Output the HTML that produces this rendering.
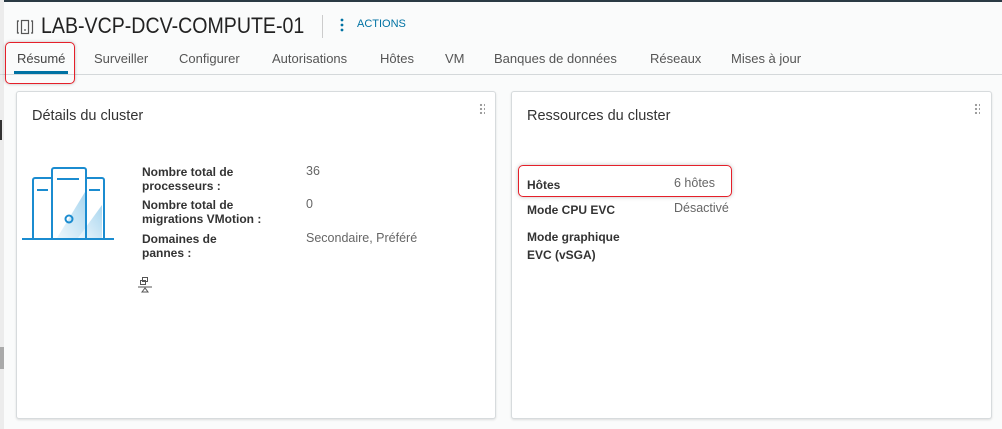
<!DOCTYPE html>
<html><head><meta charset="utf-8"><style>
*{margin:0;padding:0;box-sizing:border-box}
body{width:1002px;height:429px;overflow:hidden;background:#fafbfb;font-family:"Liberation Sans",sans-serif;position:relative;color:#333}
.a{position:absolute;white-space:nowrap}
.tab{position:absolute;top:51px;font-size:13px;color:#555}
.card{position:absolute;background:#fff;border:1px solid #d7dbdd;border-radius:3px;box-shadow:0 1px 2px rgba(0,0,0,.12)}
.lb{position:absolute;font-size:12px;font-weight:bold;color:#333;line-height:14px}
.vl{position:absolute;font-size:12.5px;color:#666}
.grip{position:absolute;width:6px;height:11px;background-image:radial-gradient(circle,#999 1px,transparent 1.3px);background-size:4px 4px}
</style></head><body>
<div class="a" style="left:0;top:0;width:1002px;height:2px;background:#2a3a44"></div>
<div class="a" style="left:0;top:0;width:4px;height:429px;background:#ececec"></div>
<div class="a" style="left:0;top:347px;width:4px;height:22px;background:#aaa"></div>
<div class="a" style="left:0;top:120px;width:2px;height:20px;background:#333"></div>
<svg class="a" style="left:16px;top:18px" width="18" height="18" viewBox="0 0 18 18" fill="none" stroke="#555" stroke-width="1.2"><path d="M3 3H1.5V15H3M15 3H16.5V15H15"/><rect x="5.5" y="2.5" width="7" height="13"/><path d="M8 12h2"/></svg>
<div class="a" style="left:41px;top:13px;font-size:22px;color:#222;transform:scaleX(0.89);transform-origin:0 0">LAB-VCP-DCV-COMPUTE-01</div>
<div class="a" style="left:322px;top:15px;width:1px;height:23px;background:#ccc"></div>
<svg class="a" style="left:339px;top:17px" width="6" height="16"><circle cx="3" cy="3" r="1.4" fill="#0072a3"/><circle cx="3" cy="8" r="1.4" fill="#0072a3"/><circle cx="3" cy="13" r="1.4" fill="#0072a3"/></svg>
<div class="a" style="left:357px;top:18px;font-size:11px;color:#0072a3">ACTIONS</div>
<div class="a" style="left:0;top:74px;width:1002px;height:1px;background:#d4d8da"></div>
<div class="tab" style="left:17px;color:#444">Résumé</div>
<div class="a" style="left:14px;top:71px;width:54px;height:3px;background:#0072a3"></div>
<div class="a" style="left:5px;top:42px;width:70px;height:42px;border:1.5px solid #e5202a;border-radius:5px;box-shadow:0 0 3px rgba(0,0,0,.25)"></div>
<div class="tab" style="left:94px">Surveiller</div>
<div class="tab" style="left:179px">Configurer</div>
<div class="tab" style="left:272px">Autorisations</div>
<div class="tab" style="left:380px">Hôtes</div>
<div class="tab" style="left:445px">VM</div>
<div class="tab" style="left:494px">Banques de données</div>
<div class="tab" style="left:650px">Réseaux</div>
<div class="tab" style="left:731px">Mises à jour</div>

<div class="card" style="left:16px;top:91px;width:480px;height:328px"></div>
<div class="grip" style="left:479px;top:103px"></div>
<div class="a" style="left:32px;top:108px;font-size:14.5px;color:#333">Détails du cluster</div>
<svg class="a" style="left:21px;top:165px" width="96" height="78" viewBox="0 0 96 78">
<defs><linearGradient id="g" x1="0" y1="1" x2="1" y2="0"><stop offset="0" stop-color="#eef7fc"/><stop offset="1" stop-color="#a9d6ef"/></linearGradient></defs>
<path d="M36 73 L64 27 V73Z" fill="url(#g)"/>
<path d="M57 73 L81 40 V73Z" fill="url(#g)"/>
<g fill="none" stroke="#1b8cd0" stroke-width="2">
<path d="M12 74V15a2 2 0 0 1 2-2H30"/><path d="M16 25h11"/>
<path d="M31 74V5a2 2 0 0 1 2-2h30a2 2 0 0 1 2 2V74"/><path d="M36 14h22"/>
<path d="M66 13h15a2 2 0 0 1 2 2V74"/><path d="M68 25h11"/>
<circle cx="48" cy="54" r="3.5"/><path d="M1 74h92"/></g></svg>
<div class="lb" style="left:142px;top:165px">Nombre total de<br>processeurs :</div>
<div class="vl" style="left:306px;top:164px">36</div>
<div class="lb" style="left:142px;top:198px">Nombre total de<br>migrations VMotion :</div>
<div class="vl" style="left:306px;top:197px">0</div>
<div class="lb" style="left:142px;top:232px">Domaines de<br>pannes :</div>
<div class="vl" style="left:306px;top:231px">Secondaire, Préféré</div>
<svg class="a" style="left:137px;top:276px" width="16" height="18" viewBox="0 0 16 18" fill="none" stroke="#555" stroke-width="1"><rect x="5.5" y="1.5" width="5" height="4"/><rect x="3.5" y="4.5" width="5" height="4"/><path d="M1 11h14M8 12l-3 4h6z"/></svg>

<div class="card" style="left:511px;top:91px;width:481px;height:328px"></div>
<div class="grip" style="left:974px;top:103px"></div>
<div class="a" style="left:527px;top:108px;font-size:14.5px;color:#333">Ressources du cluster</div>
<div class="a" style="left:518px;top:165px;width:214px;height:32px;border:1.5px solid #e5202a;border-radius:5px;box-shadow:0 0 4px rgba(0,0,0,.25)"></div>
<div class="lb" style="left:527px;top:178px">Hôtes</div>
<div class="vl" style="left:674px;top:176px">6 hôtes</div>
<div class="lb" style="left:527px;top:203px">Mode CPU EVC</div>
<div class="vl" style="left:674px;top:201px">Désactivé</div>
<div class="lb" style="left:527px;top:228px;line-height:18px">Mode graphique<br>EVC (vSGA)</div>
</body></html>
